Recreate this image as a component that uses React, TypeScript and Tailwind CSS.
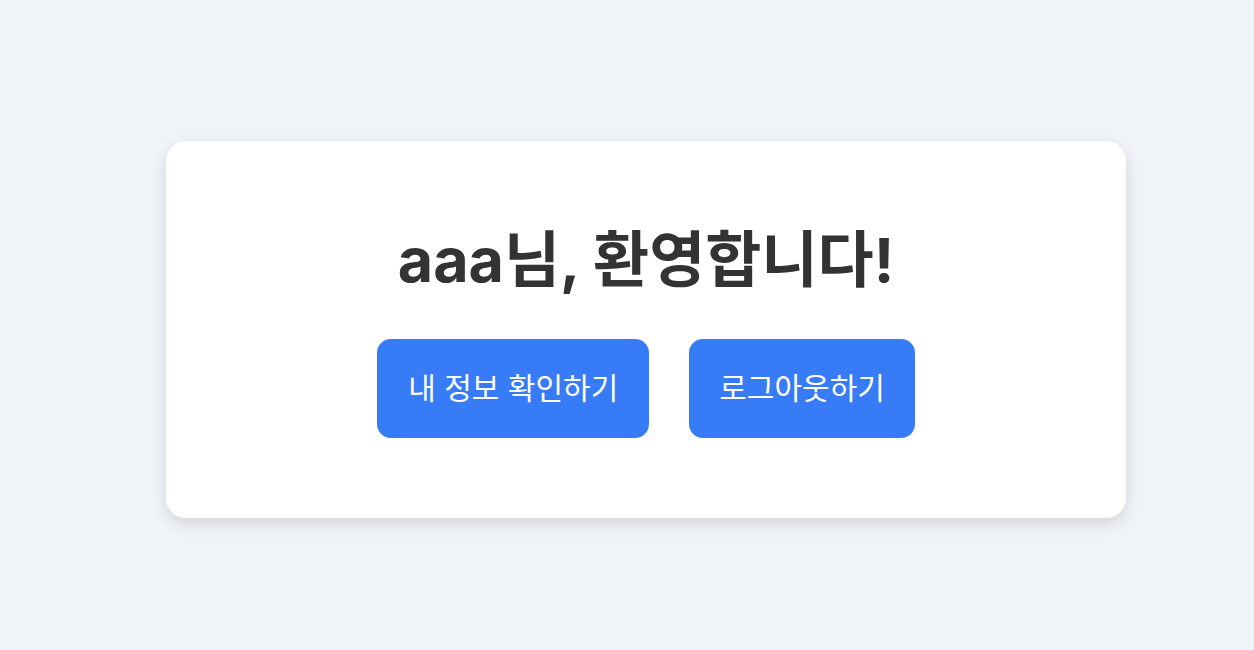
import React from 'react';

export default function App() {
  return (
    <div
      className="min-h-screen w-full flex items-center justify-center bg-[#f0f3f8] pl-[38px] pt-[9px]"
      style={{ fontFamily: 'Inter, "Noto Sans CJK KR", sans-serif' }}
    >
      <div className="w-[960px] bg-white rounded-[20px] shadow-[0_6px_16px_rgba(0,0,0,0.12)] px-10 pt-[86px] pb-[80px] flex flex-col items-center">
        <h1 className="text-[61px] leading-[67px] font-bold text-[#333333]">
          aaa님, 환영합니다!
        </h1>
        <div className="mt-[45px] flex gap-10">
          <button className="h-[99px] px-[31px] rounded-[14px] bg-[#387bf6] text-white text-[30px]">
            내 정보 확인하기
          </button>
          <button className="h-[99px] px-[30px] rounded-[14px] bg-[#387bf6] text-white text-[30px]">
            로그아웃하기
          </button>
        </div>
      </div>
    </div>
  );
}
